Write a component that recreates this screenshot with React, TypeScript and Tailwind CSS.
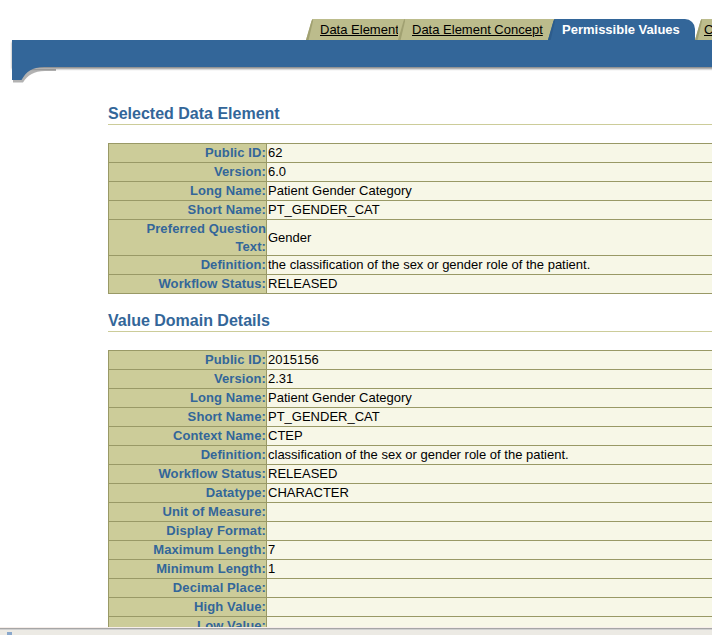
import React from 'react';

const OLIVE = '#bcbc8c';
const OLIVE_DARK = '#a1a172';
const BLUE = '#336699';

interface TabProps {
  label: string;
  active?: boolean;
  behind: string;
  width: string;
  last?: boolean;
}

function Tab({ label, active, behind, width, last }: TabProps) {
  const fill = active ? BLUE : OLIVE;
  const bevel = active ? '#2d5c8c' : OLIVE_DARK;
  return (
    <div className="flex shrink-0">
      <svg width="7" height="21" className="block shrink-0">
        <rect width="7" height="21" fill={behind} />
        <path d="M0 21 L5.5 2 Q6.2 0 7 0 V21 Z" fill={fill} />
        <path d="M0 21 L5.5 2 Q6.2 0 7 0 V2.5 L2.6 21 Z" fill={bevel} />
      </svg>
      <div
        className={
          active
            ? `${width} h-[21px] leading-[22px] pl-[7px] bg-[#336699] rounded-tr-[10px] text-white font-bold whitespace-nowrap`
            : `${width} h-[21px] leading-[22px] ${last ? 'pl-[2px]' : 'pl-[7px]'} bg-[#bcbc8c] text-black underline whitespace-nowrap overflow-hidden`
        }
      >
        {label}
      </div>
    </div>
  );
}

type Row = { label: React.ReactNode; value?: string; tall?: boolean };

function DetailTable({ rows }: { rows: Row[] }) {
  return (
    <div className="w-[720px] border-t border-l border-[#999966]">
      {rows.map((r, i) => (
        <div key={i} className="flex border-b border-[#999966]">
          <div
            className={`w-[158px] shrink-0 border-r border-[#999966] bg-[#cccc99] text-right font-bold tracking-[0.1px] text-[#336699] ${
              r.tall ? 'leading-[17.5px]' : 'leading-[18px]'
            }`}
          >
            {r.label}
          </div>
          <div className="flex-1 flex items-center bg-[#f7f7e7] pl-px leading-[18px] min-h-[18px] whitespace-nowrap">
            {r.value}
          </div>
        </div>
      ))}
    </div>
  );
}

function SectionTitle({ children }: { children: React.ReactNode }) {
  return (
    <h2 className="w-[720px] h-[21px] leading-[20px] text-[16px] font-bold text-[#336699] border-b border-[#cccc99]">
      {children}
    </h2>
  );
}

const dataElement: Row[] = [
  { label: 'Public ID:', value: '62' },
  { label: 'Version:', value: '6.0' },
  { label: 'Long Name:', value: 'Patient Gender Category' },
  { label: 'Short Name:', value: 'PT_GENDER_CAT' },
  {
    label: (
      <>
        Preferred Question
        <br />
        Text:
      </>
    ),
    value: 'Gender',
    tall: true,
  },
  { label: 'Definition:', value: 'the classification of the sex or gender role of the patient.' },
  { label: 'Workflow Status:', value: 'RELEASED' },
];

const valueDomain: Row[] = [
  { label: 'Public ID:', value: '2015156' },
  { label: 'Version:', value: '2.31' },
  { label: 'Long Name:', value: 'Patient Gender Category' },
  { label: 'Short Name:', value: 'PT_GENDER_CAT' },
  { label: 'Context Name:', value: 'CTEP' },
  { label: 'Definition:', value: 'classification of the sex or gender role of the patient.' },
  { label: 'Workflow Status:', value: 'RELEASED' },
  { label: 'Datatype:', value: 'CHARACTER' },
  { label: 'Unit of Measure:' },
  { label: 'Display Format:' },
  { label: 'Maximum Length:', value: '7' },
  { label: 'Minimum Length:', value: '1' },
  { label: 'Decimal Place:' },
  { label: 'High Value:' },
  { label: 'Low Value:' },
];

export default function App() {
  return (
    <div className="w-[712px] h-[635px] overflow-hidden bg-white flex flex-col font-['Liberation_Sans',Arial,sans-serif] text-[13px] text-black">
      <div className="flex-1 min-h-0 overflow-hidden">
        <div className="w-[900px]">
          {/* Tabs + blue band */}
          <div className="pt-[19px]">
            <div className="flex pl-[306px] h-[21px]">
              <Tab label="Data Element" behind="#ffffff" width="w-[85px]" />
              <Tab label="Data Element Concept" behind={OLIVE} width="w-[143px]" />
              <Tab label="Permissible Values" active behind={OLIVE} width="w-[140px]" />
              <Tab label="Classifications" behind="#ffffff" width="w-[120px]" last />
            </div>
            <div className="ml-[12px] h-[27px] bg-[#336699] shadow-[0_2px_2px_rgba(0,0,0,0.45)]" />
            <svg width="44" height="16" className="block ml-[12px]">
              <path d="M1 2 H44 V4 H33 C22 4 16 8 11 15.5 H1 Z" fill="#000" opacity="0.3" />
              <path d="M0 0 H32 C20 0 14 5 9.5 13 H0 Z" fill={BLUE} />
            </svg>
          </div>

          {/* Content */}
          <div className="pl-[108px] mt-[21px]">
            <SectionTitle>Selected Data Element</SectionTitle>
            <div className="mt-[18px]">
              <DetailTable rows={dataElement} />
            </div>

            <div className="mt-[17px]">
              <SectionTitle>Value Domain Details</SectionTitle>
            </div>
            <div className="mt-[18px]">
              <DetailTable rows={valueDomain} />
            </div>
          </div>
        </div>
      </div>

      {/* window frame strip */}
      <div className="h-[8px] shrink-0 flex flex-col">
        <div className="h-px bg-[#f6eeea]" />
        <div className="h-px bg-[#a6a6a6]" />
        <div className="h-px bg-[#cfcfcf]" />
        <div className="flex-1 bg-[#eceae4]">
          <div className="ml-[7px] mt-[2px] w-[5px] h-[3px] bg-[#8aa8cc]" />
        </div>
      </div>
    </div>
  );
}
